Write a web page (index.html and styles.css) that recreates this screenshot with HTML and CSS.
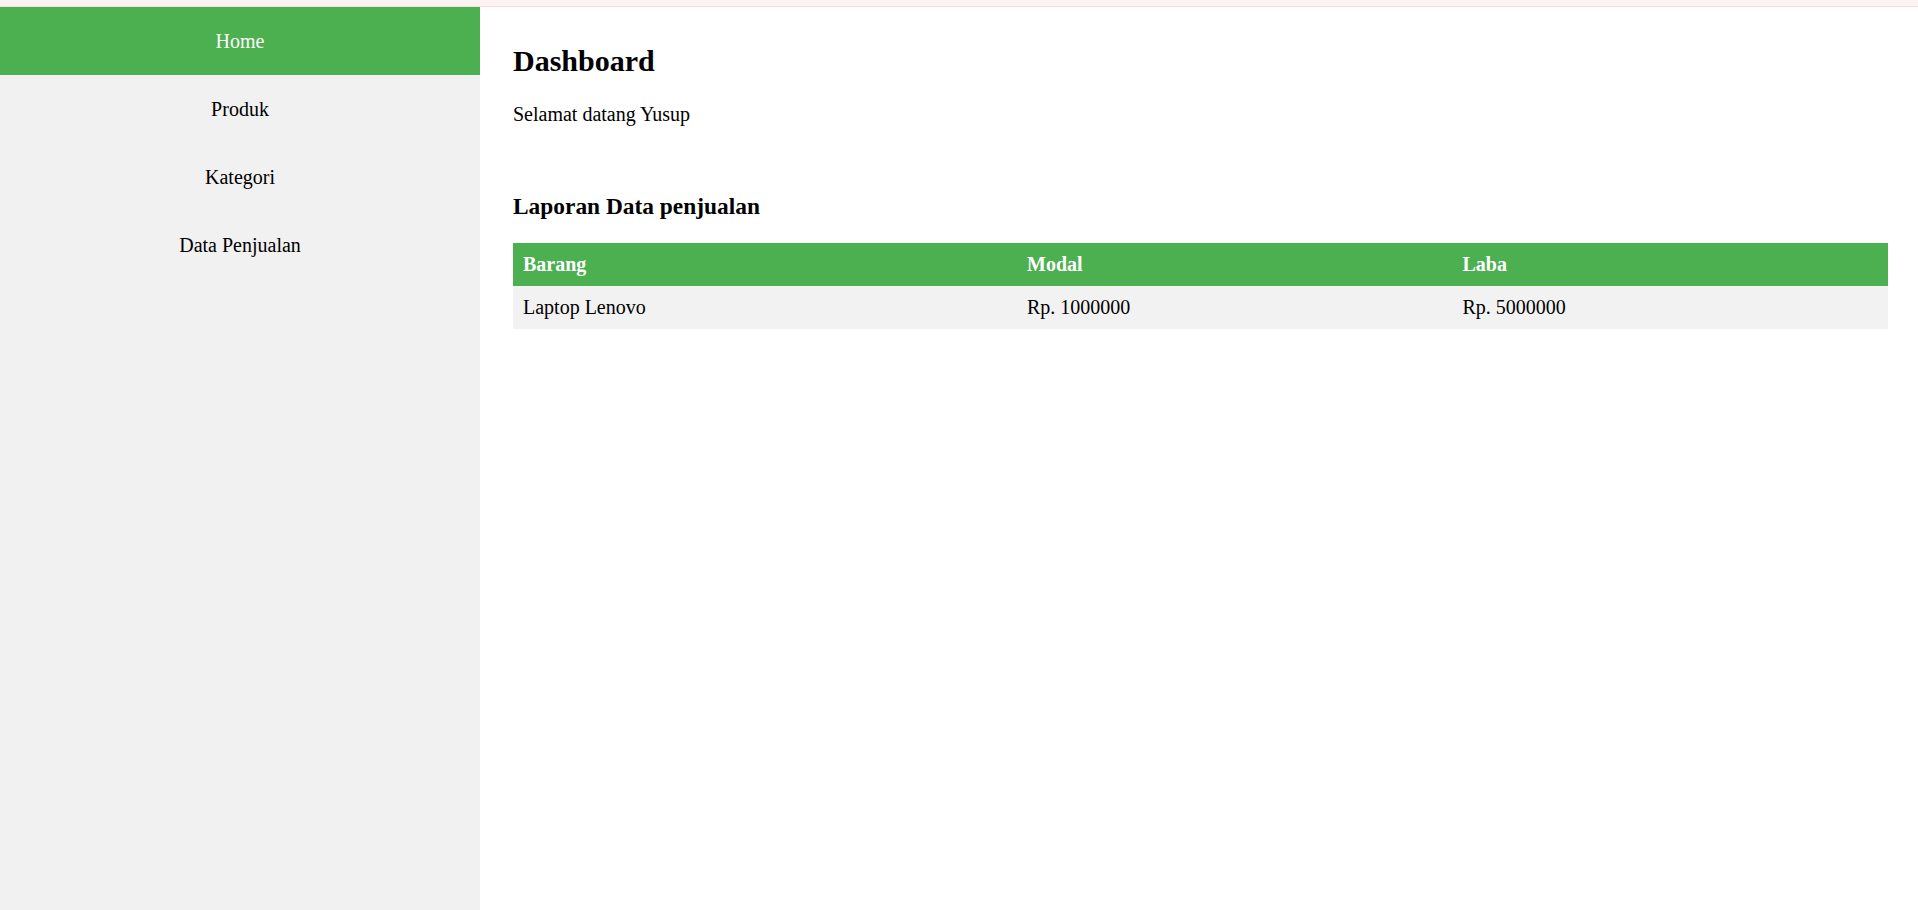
FILE: index.html
```html
<!DOCTYPE html>
<html lang="id">
<head>
<meta charset="utf-8">
<title>Dashboard</title>
<link rel="stylesheet" href="styles.css">
</head>
<body>
<div class="topbar"></div>
<div class="layout">
  <nav class="sidebar">
    <a class="nav-item active" href="#">Home</a>
    <a class="nav-item" href="#">Produk</a>
    <a class="nav-item" href="#">Kategori</a>
    <a class="nav-item" href="#">Data Penjualan</a>
  </nav>
  <main class="content">
    <h2 class="title">Dashboard</h2>
    <p class="welcome">Selamat datang Yusup</p>
    <h3 class="subtitle">Laporan Data penjualan</h3>
    <table class="report">
      <thead>
        <tr><th>Barang</th><th>Modal</th><th>Laba</th></tr>
      </thead>
      <tbody>
        <tr><td>Laptop Lenovo</td><td>Rp. 1000000</td><td>Rp. 5000000</td></tr>
      </tbody>
    </table>
  </main>
</div>
</body>
</html>
```
FILE: styles.css
```css
html, body {
  margin: 0;
  padding: 0;
  height: 100%;
}
body {
  font-family: "Liberation Serif", "Times New Roman", serif;
  font-size: 20px;
  color: #000;
  background: #fff;
  display: flex;
  flex-direction: column;
}
.topbar {
  height: 6px;
  background: #fef3f3;
  border-bottom: 1px solid #f8dede;
  flex: none;
}
.layout {
  flex: 1;
  display: flex;
  min-height: 0;
}
.sidebar {
  width: 480px;
  flex: none;
  background: #f1f1f1;
  display: flex;
  flex-direction: column;
}
.nav-item {
  display: block;
  text-align: center;
  color: #000;
  text-decoration: none;
  line-height: 23px;
  padding: 22.5px 0;
}
.nav-item.active {
  background: #4caf50;
  color: #fff;
}
.content {
  flex: 1;
  padding: 37px 30px 0 33px;
}
.title {
  font-size: 30px;
  font-weight: bold;
  line-height: 34.5px;
  margin: 0 0 24px;
}
.welcome {
  margin: 0;
  line-height: 23px;
}
.subtitle {
  font-size: 23.4px;
  font-weight: bold;
  line-height: 27px;
  margin: 67px 0 23px;
}
.report {
  width: 100%;
  border-collapse: collapse;
}
.report th,
.report td {
  text-align: left;
  padding: 10px;
  line-height: 23px;
}
.report th {
  background: #4caf50;
  color: #fff;
  font-weight: bold;
}
.report tbody tr {
  background: #f2f2f2;
}
```
